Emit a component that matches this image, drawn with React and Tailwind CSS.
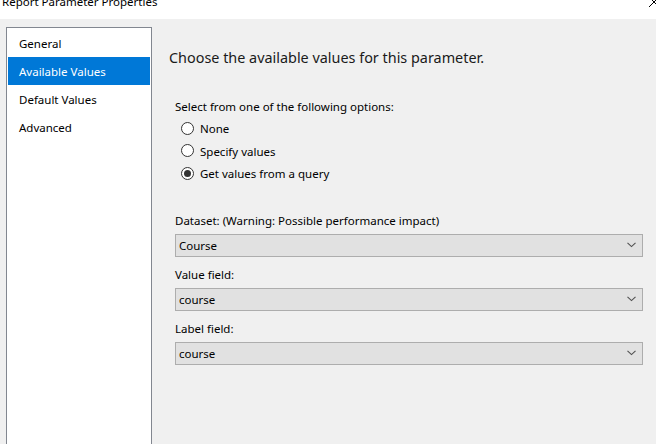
import React from "react";

const font = { fontFamily: '"Segoe UI", "Noto Sans", sans-serif' };

function Radio({ checked, label }) {
  return (
    <div className="flex h-[22.5px] items-center">
      <svg width="13" height="13" viewBox="0 0 13 13" className="ml-[6px] shrink-0">
        <circle cx="6.5" cy="6.5" r="6" fill="#ffffff" stroke="#333333" strokeWidth="1" />
        {checked && <circle cx="6.5" cy="6.5" r="3.5" fill="#333333" />}
      </svg>
      <span className="ml-[6px] pt-[2px] text-[11.5px] leading-[16px] text-black">{label}</span>
    </div>
  );
}

function Select({ value }) {
  return (
    <div className="flex h-[23px] w-[468px] items-center justify-between border border-[#adadad] bg-[#e1e1e1] pl-[3px] pr-[6px]">
      <span className="pt-[1px] text-[11.5px] leading-[16px] text-black">{value}</span>
      <svg width="9" height="6" viewBox="0 0 9 6">
        <path d="M0.5 0.8 L4.5 4.6 L8.5 0.8" fill="none" stroke="#505050" strokeWidth="1.1" />
      </svg>
    </div>
  );
}

export default function App() {
  const items = ["General", "Available Values", "Default Values", "Advanced"];
  return (
    <div className="relative h-[444px] w-[656px] overflow-hidden bg-[#f0f0f0]" style={font}>
      <div className="relative h-[19px] bg-white">
        <div className="pl-[2px] text-[11.5px] leading-[16px] text-black -translate-y-[6px]">
          Report Parameter Properties
        </div>
        <svg className="absolute left-[648px] top-[-4px]" width="12" height="12" viewBox="0 0 12 12">
          <path d="M1 1 L11 11 M11 1 L1 11" stroke="#000" strokeWidth="1" />
        </svg>
      </div>
      <div className="flex">
        <div className="ml-[6px] mt-[8px] h-[440px] w-[146px] border border-[#828790] bg-white p-[1px]">
          {items.map((it, i) => (
            <div
              key={it}
              className={
                "flex h-[28px] items-center pl-[11px] pt-[2px] text-[11.5px] leading-[16px] " +
                (i === 1 ? "bg-[#0078d7] text-white" : "text-black")
              }
            >
              {it}
            </div>
          ))}
        </div>
        <div className="ml-[17px] flex flex-col">
          <div className="mt-[29px] text-[14.4px] leading-[20px] text-[#1a1a1a]">
            Choose the available values for this parameter.
          </div>
          <div className="ml-[6px] flex flex-col">
            <div className="mt-[31px] text-[11.5px] leading-[16px] text-black">
              Select from one of the following options:
            </div>
            <div className="mt-[2px] flex flex-col">
              <Radio label="None" />
              <Radio label="Specify values" />
              <Radio checked label="Get values from a query" />
            </div>
            <div className="mt-[28px] text-[11.5px] leading-[16px] text-black">
              Dataset: (Warning: Possible performance impact)
            </div>
            <div className="mt-[5px]">
              <Select value="Course" />
            </div>
            <div className="mt-[10px] text-[11.5px] leading-[16px] text-black">Value field:</div>
            <div className="mt-[5px]">
              <Select value="course" />
            </div>
            <div className="mt-[10px] text-[11.5px] leading-[16px] text-black">Label field:</div>
            <div className="mt-[5px]">
              <Select value="course" />
            </div>
          </div>
        </div>
      </div>
    </div>
  );
}
